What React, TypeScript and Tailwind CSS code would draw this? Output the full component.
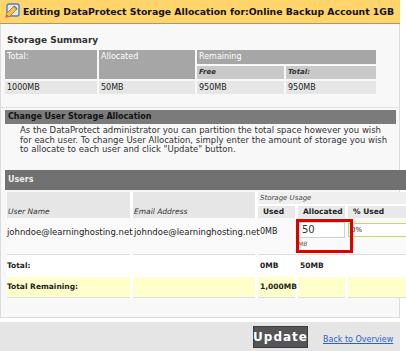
import React from "react";

function EditIcon() {
  return (
    <svg width="17" height="17" viewBox="0 0 17 17" className="shrink-0">
      <rect x="4" y="1" width="12" height="12" rx="2" fill="#dbe9f7" stroke="#4f7fc0" strokeWidth="1.4" />
      <path d="M3 11 L11 3 L14 6 L6 14 Z" fill="#f3c04a" stroke="#a8741a" strokeWidth="0.8" />
      <path d="M3 11 L6 14 L2.2 15.2 Z" fill="#e8607a" />
      <path d="M11 3 L14 6" stroke="#777" strokeWidth="1.4" />
    </svg>
  );
}

export default function App() {
  const font = { fontFamily: '"DejaVu Sans", Verdana, sans-serif' };
  return (
    <div className="w-[406px] h-[351px] bg-white overflow-hidden relative text-[8px] text-[#222]" style={font}>
      {/* Header */}
      <div className="w-[400px] h-[24px] bg-[#fed46b] border-b border-[#a89a6a] flex items-center gap-[3px] pl-[3px]">
        <EditIcon />
        <span className="text-[9.3px] font-bold text-[#111] whitespace-nowrap">
          Editing DataProtect Storage Allocation for:Online Backup Account 1GB
        </span>
      </div>

      {/* Main panel */}
      <div className="w-[400px] h-[294px] bg-[#f8f8f8] border-x border-b border-[#dcdcdc] flex flex-col">
        {/* Storage summary */}
        <div className="h-[84px] border-b border-[#e2e2e2] pl-[4px] pt-[10px]">
          <div className="text-[9px] font-bold text-[#333] pl-[2px] h-[16px]">Storage Summary</div>
          <div className="grid grid-cols-[92px_96px_87px_90px] grid-rows-[14px_13px_13px] gap-[2px]">
            <div className="row-span-2 bg-[#a6a6a6] text-white pl-[2px] leading-[13px]">Total:</div>
            <div className="row-span-2 bg-[#a6a6a6] text-white pl-[2px] leading-[13px]">Allocated</div>
            <div className="col-span-2 bg-[#a6a6a6] text-white pl-[2px] leading-[14px]">Remaining</div>
            <div className="bg-[#c9c9c9] text-[#333] italic font-bold text-[7px] pl-[2px] leading-[13px]">Free</div>
            <div className="bg-[#c9c9c9] text-[#333] italic font-bold text-[7px] pl-[2px] leading-[13px]">Total:</div>
            <div className="bg-[#e6e6e6] pl-[2px] leading-[13px]">1000MB</div>
            <div className="bg-[#e6e6e6] pl-[2px] leading-[13px]">50MB</div>
            <div className="bg-[#e6e6e6] pl-[2px] leading-[13px]">950MB</div>
            <div className="bg-[#e6e6e6] pl-[2px] leading-[13px]">950MB</div>
          </div>
        </div>

        {/* Change allocation */}
        <div className="mt-[2px] ml-[4px] w-[391px] h-[14px] bg-[#7b7b7b] text-[8px] font-bold text-[#111] pl-[3px] leading-[14px]">
          Change User Storage Allocation
        </div>
        <div className="pl-[19px] pr-[8px] pt-[2px] leading-[9.5px] text-[8.5px] text-[#333] h-[46px]">
          As the DataProtect administrator you can partition the total space however you wish for each user. To change User Allocation, simply enter the amount of storage you wish to allocate to each user and click "Update" button.
        </div>

        {/* Users */}
        <div className="ml-[4px] w-[410px] h-[20px] bg-[#717171] text-[8px] font-bold text-[#eeeeee] pl-[3px] leading-[20px]">
          Users
        </div>
        <div className="relative ml-[6px] mt-[2px] w-[410px] bg-white">
          <div className="grid grid-cols-[123px_122px_37px_47px_60px] grid-rows-[12px_12px] gap-x-[3px] gap-y-[2px]">
            <div className="row-span-2 bg-[#e6e6e6] italic text-[7.5px] text-[#333] pl-[1px] flex items-end pb-[1px]">User Name</div>
            <div className="row-span-2 bg-[#e6e6e6] italic text-[7.5px] text-[#333] pl-[1px] flex items-end pb-[1px]">Email Address</div>
            <div className="col-span-3 bg-[#efefef] italic text-[7px] text-[#444] pl-[2px] leading-[12px]">Storage Usage</div>
            <div className="bg-[#e9e9e9] font-bold text-[7.5px] pl-[5px] leading-[12px]">Used</div>
            <div className="bg-[#e9e9e9] font-bold text-[7.5px] pl-[5px] leading-[12px]">Allocated</div>
            <div className="bg-[#e9e9e9] font-bold text-[7.5px] pl-[5px] leading-[12px]">% Used</div>
          </div>
          {/* data row */}
          <div className="grid grid-cols-[123px_122px_37px_47px_60px] gap-x-[3px] h-[37px] bg-[#fafafa]">
            <div className="border-b border-[#dedede] pt-[8px] whitespace-nowrap text-[8.5px]">johndoe@learninghosting.net</div>
            <div className="border-b border-[#dedede] pt-[8px] whitespace-nowrap text-[8.5px] pl-[1px]">johndoe@learninghosting.net</div>
            <div className="border-b border-[#dedede] pt-[8px] text-[8px] pl-[2px]">0MB</div>
            <div className="border-b border-[#dedede] pt-[4px]">
              <div className="w-[47px] h-[16px] bg-white border border-[#cfcfcf] text-[10px] leading-[14px] pl-[3px] text-[#333]">50</div>
              <div className="italic text-[6px] text-[#555] pt-[1px]">MB</div>
            </div>
            <div className="border-b border-[#dedede] pt-[5px]">
              <div className="w-[60px] h-[14px] bg-white border border-[#c6d96a] text-[7px] leading-[12px] pl-[2px]">0%</div>
            </div>
          </div>
          {/* total row */}
          <div className="grid grid-cols-[123px_122px_37px_47px_60px] gap-x-[3px] h-[20px] bg-white">
            <div className="border-b border-[#dedede] font-bold text-[7.5px] leading-[22px]">Total:</div>
            <div className="border-b border-[#dedede]"></div>
            <div className="border-b border-[#dedede] font-bold text-[7.5px] leading-[22px] pl-[2px]">0MB</div>
            <div className="border-b border-[#dedede] font-bold text-[7.5px] leading-[22px] pl-[2px]">50MB</div>
            <div></div>
          </div>
          {/* remaining */}
          <div className="grid grid-cols-[123px_122px_37px_47px_60px] gap-x-[3px] h-[23px] bg-white pt-[2px]">
            <div className="bg-[#ffffcc] border-b border-[#dedede] font-bold text-[7.5px] leading-[20px]">Total Remaining:</div>
            <div className="bg-[#ffffcc] border-b border-[#dedede]"></div>
            <div className="bg-[#ffffcc] border-b border-[#dedede] font-bold text-[7.5px] leading-[20px] pl-[2px]">1,000MB</div>
            <div className="bg-[#ffffcc] border-b border-[#dedede]"></div>
            <div className="bg-[#ffffcc] border-b border-[#dedede]"></div>
          </div>
          {/* highlight box */}
          <div className="absolute left-[289px] top-[27px] w-[57px] h-[34px] border-[3px] border-[#e00000]"></div>
        </div>
      </div>

      {/* Footer */}
      <div className="mt-[4px] w-[400px] h-[30px] bg-[#e5e5e5] flex items-center pl-[253px] gap-[15px]">
        <div className="w-[55px] h-[22px] bg-[#555555] border border-[#3a3a3a] text-white font-bold text-[12px] tracking-[1px] flex items-center justify-center">
          Update
        </div>
        <a href="#" className="text-[8px] text-[#2a63c8] underline whitespace-nowrap pt-[5px]">Back to Overview</a>
      </div>
    </div>
  );
}
